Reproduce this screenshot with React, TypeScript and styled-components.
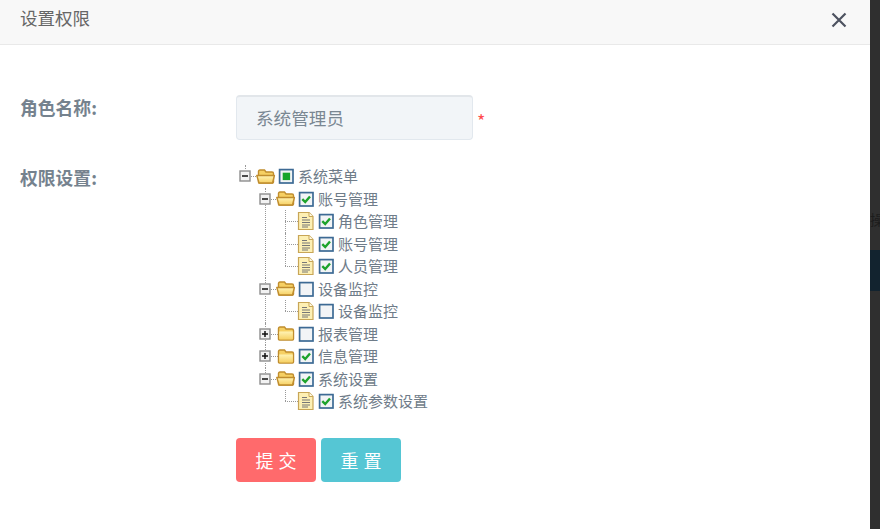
import styled, { createGlobalStyle } from "styled-components";

interface TreeNode {
  label: string;
  state: "on" | "off" | "part";
  open?: boolean;
  children?: TreeNode[];
}

const tree: TreeNode = {
  label: "系统菜单",
  state: "part",
  open: true,
  children: [
    {
      label: "账号管理",
      state: "on",
      open: true,
      children: [
        { label: "角色管理", state: "on" },
        { label: "账号管理", state: "on" },
        { label: "人员管理", state: "on" },
      ],
    },
    {
      label: "设备监控",
      state: "off",
      open: true,
      children: [{ label: "设备监控", state: "off" }],
    },
    { label: "报表管理", state: "off", open: false, children: [{ label: "x", state: "off" }] },
    { label: "信息管理", state: "on", open: false, children: [{ label: "x", state: "on" }] },
    {
      label: "系统设置",
      state: "on",
      open: true,
      children: [{ label: "系统参数设置", state: "on" }],
    },
  ],
};

const Switch = ({ open }: { open: boolean }) => (
  <svg width="12" height="12" viewBox="0 0 12 12">
    <rect x="1" y="1" width="10" height="10" fill="#f2f2f2" stroke="#8e8e8e" strokeWidth="1.4" />
    <path d="M3 6h6" stroke="#111" strokeWidth="1.5" />
    {!open && <path d="M6 3v6" stroke="#111" strokeWidth="1.5" />}
  </svg>
);

const FolderIcon = ({ open }: { open: boolean }) => (
  <svg width="20" height="17" viewBox="0 0 20 16">
    <defs>
      <linearGradient id="folderFill" x1="0" y1="0" x2="0" y2="1">
        <stop offset="0" stopColor="#fff3b4" />
        <stop offset="1" stopColor="#f6d063" />
      </linearGradient>
    </defs>
    <path
      d="M2.500 13.500V3q0-1.500 1.500-1.500h4.500l1.500 2h6q1.500 0 1.500 1.500v8.500q0 1-1 1H3.500q-1 0-1-1z"
      fill="#f6d063"
      stroke="#c08d2e"
      strokeWidth="1.400"
    />
    {open ? (
      <path
        d="M3 14.500L.8 7h17.600l-1.900 7.500z"
        fill="url(#folderFill)"
        stroke="#c08d2e"
        strokeWidth="1.400"
        strokeLinejoin="round"
      />
    ) : (
      <path d="M3.200 6h13.600v7.200q0 .8-.8.8H4q-.8 0-.8-.8z" fill="url(#folderFill)" />
    )}
  </svg>
);

const FileIcon = () => (
  <svg width="18" height="18" viewBox="-1 0 18 18">
    <path d="M1.500.5h10.500l4 4v13h-14.500z" fill="#fdf0b4" stroke="#c8a657" strokeWidth="1.200" />
    <path d="M12 .5v4h4" fill="#fffbe6" stroke="#c8a657" />
    <path d="M5 5.500h5M5 8h8M5 10.500h8M5 13h8M5 15h6" stroke="#777" strokeWidth="1" />
  </svg>
);

const CheckIcon = ({ state }: { state: TreeNode["state"] }) => (
  <svg width="16" height="16" viewBox="0 0 16 16">
    <rect x="1.600" y="1.600" width="13.400" height="13.400" fill="#f2f4f6" stroke="#3d6a94" strokeWidth="1.700" />
    {state === "on" && <path d="M4.300 8.200l2.900 2.800 4.800-5.500" fill="none" stroke="#1da32c" strokeWidth="2.400" />}
    {state === "part" && <rect x="4.700" y="4.700" width="7.400" height="7.400" fill="#16a52a" />}
  </svg>
);

const TreeRows = ({ node, last, root }: { node: TreeNode; last: boolean; root?: boolean }) => {
  const hasKids = !!node.children;
  return (
    <Item $last={last} $root={!!root}>
      <Row>
        <SwitchSlot>
          <HDots />
          {hasKids && (
            <SwitchBox>
              <Switch open={!!node.open} />
            </SwitchBox>
          )}
        </SwitchSlot>
        <IconSlot>{hasKids ? <FolderIcon open={!!node.open} /> : <FileIcon />}</IconSlot>
        <CheckSlot>
          <CheckIcon state={node.state} />
        </CheckSlot>
        <NodeName>{node.label}</NodeName>
      </Row>
      {node.open && node.children && (
        <Children>
          {node.children.map((c, i) => (
            <TreeRows key={i} node={c} last={i === node.children!.length - 1} />
          ))}
        </Children>
      )}
    </Item>
  );
};

export default function App() {
  return (
    <>
      <GlobalStyle />
      <Page>
        <Modal>
          <Header>
            <Title>设置权限</Title>
            <CloseIcon width="16" height="16" viewBox="0 0 16 16">
              <path d="M1.500 1.500l13 13M14.500 1.500l-13 13" stroke="#4d5260" strokeWidth="2.200" />
            </CloseIcon>
          </Header>
          <Form>
            <NameLabel>角色名称:</NameLabel>
            <InputRow>
              <NameInput>系统管理员</NameInput>
              <Required>*</Required>
            </InputRow>
            <PermLabel>权限设置:</PermLabel>
            <TreeList>
              <TreeRows node={tree} last root />
            </TreeList>
            <span />
            <Buttons>
              <ActionButton $bg="#ff6a6c">提交</ActionButton>
              <ActionButton $bg="#55c6d4">重置</ActionButton>
            </Buttons>
          </Form>
        </Modal>
        <Backdrop>
          <BackText>操</BackText>
          <BackBand />
        </Backdrop>
      </Page>
    </>
  );
}

const GlobalStyle = createGlobalStyle`
  html, body {
    margin: 0;
    padding: 0;
    background: #fff;
    overflow: hidden;
  }
  body {
    font-family: "Noto Sans CJK SC", "Liberation Sans", sans-serif;
  }
`;

const Page = styled.div`
  display: flex;
  width: 880px;
  height: 529px;
  overflow: hidden;
`;

const Modal = styled.div`
  width: 870px;
  flex: none;
  background: #fff;
`;

const Header = styled.div`
  display: flex;
  justify-content: space-between;
  align-items: flex-start;
  padding: 5px 23px 0 20px;
  height: 39px;
  background: #f8f8f8;
  border-bottom: 1px solid #e9e9e9;
`;

const Title = styled.div`
  font-size: 17.5px;
  line-height: 26px;
  color: #666;
`;

const CloseIcon = styled.svg`
  margin-top: 7px;
`;

const Form = styled.div`
  display: grid;
  grid-template-columns: 216px 1fr;
  padding: 50px 0 0 20px;
`;

const NameLabel = styled.div`
  font-size: 17.8px;
  font-weight: 700;
  line-height: 26px;
  color: #75828e;
  margin-top: -1px;
`;

const PermLabel = styled(NameLabel)`
  margin-top: 24px;
`;

const InputRow = styled.div`
  display: flex;
  align-items: center;
  gap: 4px;
`;

const NameInput = styled.div`
  width: 237px;
  height: 45px;
  box-sizing: border-box;
  padding-left: 19px;
  background: #f2f5f8;
  border: 1px solid #e2e8ee;
  border-top: 2px solid #e2e6ea;
  border-radius: 4px;
  font-size: 17.6px;
  line-height: 42px;
  color: #7a8792;
`;

const Required = styled.span`
  font-size: 18px;
  color: #ff4d4f;
  line-height: 14px;
  margin-top: 4px;
`;

const TreeList = styled.ul`
  list-style: none;
  margin: 25px 0 0;
  padding: 0 0 0 3px;
`;

const Children = styled.ul`
  list-style: none;
  margin: 0;
  padding: 0 0 0 20px;
`;

const Item = styled.li<{ $last: boolean; $root: boolean }>`
  position: relative;

  &::before {
    content: "";
    position: absolute;
    left: 6px;
    top: 0;
    height: ${(p) => (p.$root ? "6px" : p.$last ? "11px" : "100%")};
    border-left: 1px dotted #999;
  }
`;

const Row = styled.div`
  display: flex;
  align-items: center;
  height: 22.5px;
`;

const SwitchSlot = styled.span`
  position: relative;
  display: flex;
  align-items: center;
  width: 17px;
  height: 100%;
  flex: none;
`;

const HDots = styled.span`
  position: absolute;
  left: 6px;
  width: 13px;
  top: 50%;
  border-top: 1px dotted #999;
`;

const SwitchBox = styled.span`
  position: relative;
  display: flex;
  background: #fff;
`;

const IconSlot = styled.span`
  display: flex;
  position: relative;
  width: 22px;
  flex: none;
`;

const CheckSlot = styled.span`
  display: flex;
  width: 20px;
  flex: none;
`;

const NodeName = styled.span`
  font-size: 15px;
  line-height: 20px;
  color: #6f7c89;
  white-space: nowrap;
`;

const Buttons = styled.div`
  display: flex;
  gap: 5px;
  margin-top: 25px;
`;

const ActionButton = styled.button<{ $bg: string }>`
  width: 80px;
  height: 44px;
  border: none;
  border-radius: 4px;
  padding: 0 0 0 5px;
  background: ${(p) => p.$bg};
  color: #fff;
  font-family: inherit;
  font-size: 18px;
  letter-spacing: 5px;
`;

const Backdrop = styled.div`
  flex: 1;
  display: flex;
  flex-direction: column;
  background: #2f2f2f;
  padding-top: 209px;
  overflow: hidden;
`;

const BackText = styled.div`
  height: 41px;
  font-size: 14px;
  line-height: 20px;
  color: #1c1c1c;
`;

const BackBand = styled.div`
  height: 41px;
  background: #12232f;
`;
